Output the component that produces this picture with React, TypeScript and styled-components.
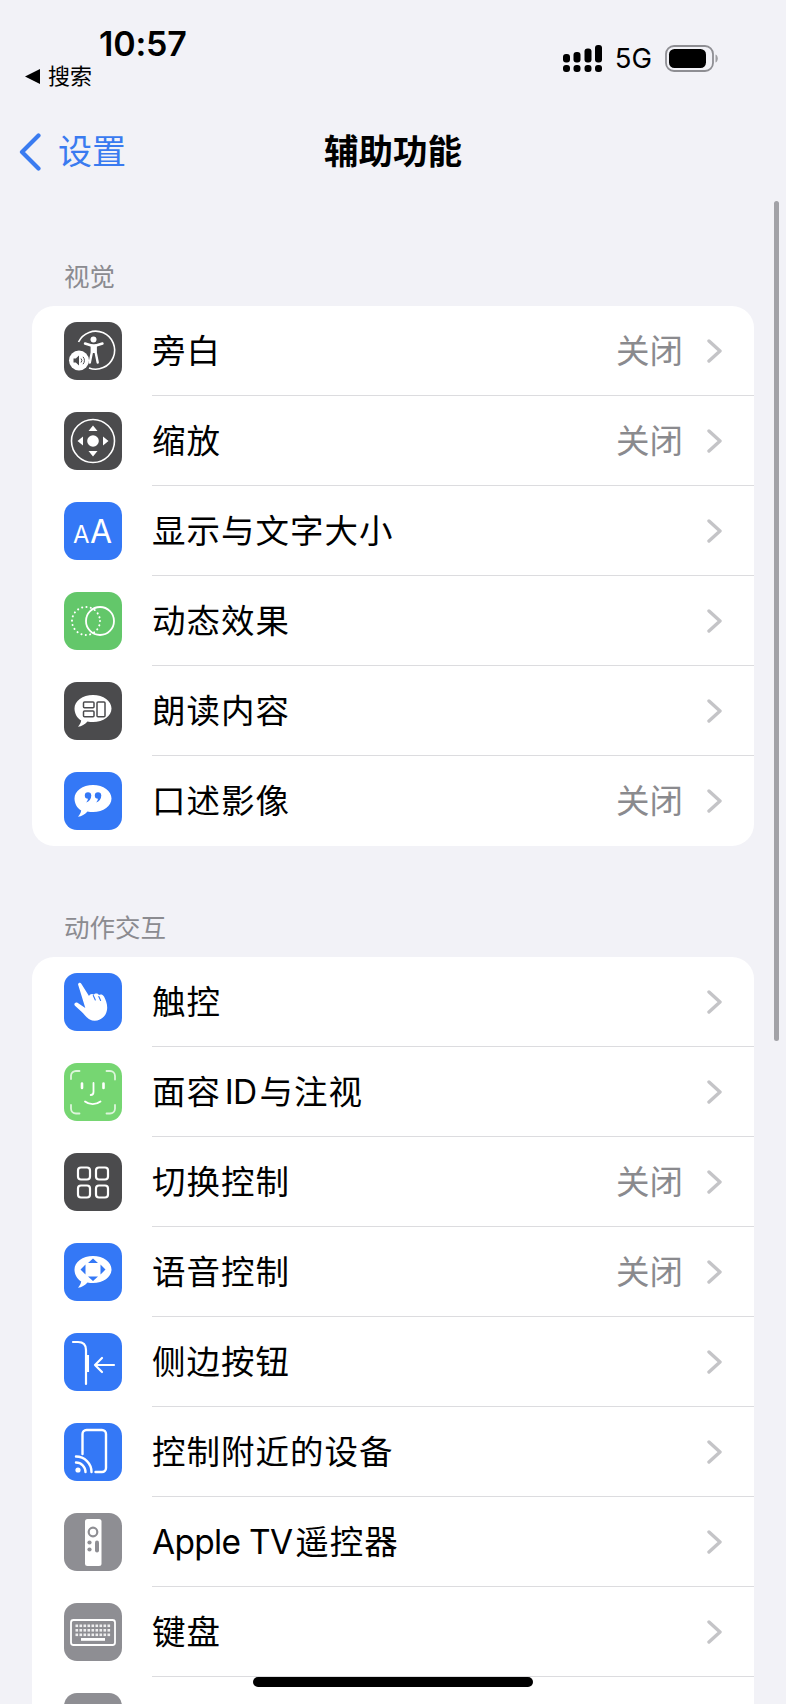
import React from "react";
import styled, { createGlobalStyle } from "styled-components";

const Global = createGlobalStyle`
  html, body { margin: 0; padding: 0; background: #f2f2f7; }
  #root { width: 786px; height: 1704px; }
  * { box-sizing: border-box; }
`;

const FONT = `Inter, "Noto Sans CJK SC", "Noto Sans", sans-serif`;

const Page = styled.div`
  position: relative;
  width: 786px;
  height: 1704px;
  overflow: hidden;
  background: #f2f2f7;
  color: #000;
  font-family: ${FONT};
`;

const StatusBar = styled.header`
  display: flex;
  justify-content: space-between;
  height: 120px;
  padding: 25px 68px 0 25px;
`;

const StatusLeft = styled.div`
  display: flex;
  flex-direction: column;
`;

const Time = styled.div`
  margin-left: 74px;
  font-size: 34px;
  line-height: 38px;
  font-weight: 600;
  letter-spacing: -0.2px;
`;

const BackCrumb = styled.div`
  display: flex;
  align-items: center;
  gap: 8px;
  margin-top: -2px;
  font-size: 22px;
  line-height: 30px;
`;

const StatusRight = styled.div`
  display: flex;
  align-items: center;
  gap: 13px;
  height: 28px;
  margin-top: 19px;
`;

const Network = styled.span`
  font-size: 27.5px;
  line-height: 28px;
  font-weight: 400;
`;

const NavBar = styled.nav`
  display: grid;
  grid-template-columns: 1fr auto 1fr;
  align-items: center;
  height: 64px;
  padding: 0 19px;
`;

const NavBack = styled.div`
  display: flex;
  align-items: center;
  gap: 17px;
  color: #3a7bf0;
  font-size: 34px;
  line-height: 64px;
`;

const NavTitle = styled.h1`
  margin: 0;
  font-size: 34.5px;
  line-height: 64px;
  font-weight: 600;
`;

const Section = styled.section<{ $top: number }>`
  margin: ${(p) => p.$top}px 32px 0;
`;

const SectionTitle = styled.h2`
  margin: 0 0 11px 32px;
  font-size: 25.5px;
  line-height: 36px;
  font-weight: 400;
  color: #8b8b90;
`;

const Card = styled.div`
  background: #fff;
  border-radius: 22px;
  overflow: hidden;
`;

const Row = styled.div`
  display: flex;
  align-items: center;
  height: 90px;
  padding-left: 32px;
`;

const IconTile = styled.div<{ $bg: string }>`
  flex: none;
  width: 58px;
  height: 58px;
  border-radius: 13px;
  background: ${(p) => p.$bg};
  svg { display: block; }
`;

const RowBody = styled.div<{ $last?: boolean }>`
  flex: 1;
  display: flex;
  align-items: center;
  height: 100%;
  margin-left: 30px;
  padding-right: 32px;
  border-bottom: ${(p) => (p.$last ? "none" : "1px solid #dcdcdf")};
`;

const Label = styled.span`
  flex: 1;
  font-size: 33.5px;
  line-height: 40px;
  letter-spacing: 1px;
`;

const Latin = styled.span<{ $gap: number; $word?: number }>`
  margin-right: ${(p) => p.$gap}px;
  letter-spacing: -0.7px;
  word-spacing: ${(p) => p.$word ?? 0}px;
`;

const Value = styled.span`
  margin-right: 24px;
  font-size: 33.5px;
  line-height: 40px;
  color: #8a8a8e;
`;

const ScrollThumb = styled.div`
  position: absolute;
  top: 201px;
  left: 774px;
  width: 5px;
  height: 840px;
  border-radius: 3px;
  background: #a2a2a7;
`;

const HomeIndicator = styled.div`
  position: absolute;
  left: 253px;
  top: 1677px;
  width: 280px;
  height: 10px;
  border-radius: 5px;
  background: #000;
`;

const BLUE = "#3478f6";
const DARK = "#4b4b4d";
const GRAY = "#8e8e93";

const Svg = ({ children }: { children: React.ReactNode }) => (
  <svg width="58" height="58" viewBox="0 0 58 58" fill="none">{children}</svg>
);

const bubble = "M29 13c10.500 0 18.500 6 18.500 13.500S39.500 40 29 40c-1.900 0-3.800-.2-5.500-.6-2.500 2.800-6 4.800-9.500 5.300 1.700-1.700 2.800-3.800 3.200-6.200C13 35.900 10.500 31.500 10.500 26.500 10.500 19 18.500 13 29 13z";

const VoiceOverIcon = () => (
  <Svg>
    <path d="M14.500 20A19 19 0 1 1 25 46" stroke="#fff" strokeWidth="1.600" />
    <circle cx="29.500" cy="17.500" r="3" fill="#fff" />
    <path d="M21 21.500l6.500 2h4.500l6.500-2" stroke="#fff" strokeWidth="2.400" strokeLinecap="round" strokeLinejoin="round" />
    <path d="M27.800 23.500v7L25.800 40.500M31.700 23.500v7L33.700 40.500" stroke="#fff" strokeWidth="2.400" strokeLinecap="round" strokeLinejoin="round" />
    <rect x="27.800" y="23" width="3.900" height="8" fill="#fff" />
    <circle cx="15" cy="38.500" r="10" fill="#fff" />
    <path d="M9.500 36.500h2.300l3.200-3v10l-3.200-3H9.500z" fill={DARK} />
    <path d="M17 36.500a3 3 0 0 1 0 4M19 34.800a5.500 5.500 0 0 1 0 7.400" stroke={DARK} strokeWidth="1" />
  </Svg>
);

const ZoomIcon = () => (
  <Svg>
    <circle cx="29" cy="29" r="21.500" stroke="#fff" strokeWidth="1.600" />
    <circle cx="29" cy="29" r="5.800" fill="#fff" />
    <path d="M29 13.500l4.500 5.500h-9zM29 44.500l-4.500-5.500h9zM13.500 29l5.500-4.500v9zM44.500 29L39 33.500v-9z" fill="#fff" />
  </Svg>
);

const TextSizeIcon = () => (
  <Svg>
    <text x="9" y="41" fontFamily="Inter, sans-serif" fontSize="24" fill="#fff">A</text>
    <text x="26" y="41" fontFamily="Inter, sans-serif" fontSize="32" fill="#fff">A</text>
  </Svg>
);

const MotionIcon = () => (
  <Svg>
    <circle cx="22" cy="29" r="14" stroke="#fff" strokeWidth="2" strokeDasharray="0.1 4.300" strokeLinecap="round" />
    <circle cx="36" cy="29" r="14" stroke="#fff" strokeWidth="1.800" />
  </Svg>
);

const SpeakIcon = () => (
  <Svg>
    <path d={bubble} fill="#fff" />
    <rect x="19.500" y="20" width="10.500" height="5.800" rx="1" stroke={DARK} strokeWidth="1.500" />
    <rect x="19.500" y="29" width="10.500" height="5.800" rx="1" stroke={DARK} strokeWidth="1.500" />
    <rect x="33" y="20" width="8" height="14.800" rx="1" stroke={DARK} strokeWidth="1.500" />
  </Svg>
);

const AudioDescIcon = () => (
  <Svg>
    <path d={bubble} fill="#fff" />
    <circle cx="24" cy="23.500" r="3.200" fill={BLUE} />
    <circle cx="34" cy="23.500" r="3.200" fill={BLUE} />
    <path d="M27.200 23.500c0 3.500-2 6-5 7 1.300-1.500 1.800-3 1.800-5zM37.200 23.500c0 3.500-2 6-5 7 1.300-1.500 1.800-3 1.800-5z" fill={BLUE} />
  </Svg>
);

const TouchIcon = () => (
  <Svg>
    <path d="M14.300 12.300c-1-2 1.800-3.400 3-1.600l7.700 12.300c.6-1.700 3.200-2.600 4.800-1.300 1-1.500 3.900-1.600 5.100.2 1.500-1 4-.6 5.100 1.500 2.600 4.800 5 12 1.300 18.300-3.700 6-11 7.300-15.500 4.800-3.700-2-5-4.700-8.500-8L11 32.800c-1.800-1.800.5-4.300 2.500-3l7.800 5.200z" fill="#fff" />
    <path d="M29.300 22.500l2 4.500M34.800 23.500l1.800 4" stroke={BLUE} strokeWidth="1.100" strokeLinecap="round" />
  </Svg>
);

const FaceIdIcon = () => (
  <Svg>
    <path d="M7 16v-3.500A5 5 0 0 1 12 8h3.500M42.500 8H46a5 5 0 0 1 5 5v3.500M51 42v3.500a5 5 0 0 1-5 5h-3.500M15.500 50.500H12a5 5 0 0 1-5-5V42" stroke="#fff" strokeOpacity="0.75" strokeWidth="1.800" strokeLinecap="round" />
    <path d="M18 20.500v4.500M39.500 20.500v4.500" stroke="#fff" strokeWidth="2.600" strokeLinecap="round" />
    <path d="M29.500 20v9c0 2-1 3-2.800 3" stroke="#fff" strokeWidth="1.800" strokeLinecap="round" />
    <path d="M21 38.500c4.500 3.500 11 3.500 15.500 0" stroke="#fff" strokeWidth="1.800" strokeLinecap="round" />
  </Svg>
);

const SwitchIcon = () => (
  <Svg>
    <rect x="14" y="14.500" width="12" height="12" rx="3" stroke="#fff" strokeWidth="2.200" />
    <rect x="32" y="14.500" width="12" height="12" rx="3" stroke="#fff" strokeWidth="2.200" />
    <rect x="14" y="32.500" width="12" height="12" rx="3" stroke="#fff" strokeWidth="2.200" />
    <rect x="32" y="32.500" width="12" height="12" rx="3" stroke="#fff" strokeWidth="2.200" />
  </Svg>
);

const VoiceControlIcon = () => (
  <Svg>
    <path d={bubble} fill="#fff" />
    <path d="M29 15.500l5 4.500H24zM29 38l-5-4.500h10zM16.500 26.500l5-5v10zM41.500 26.500l-5 5v-10z" fill={BLUE} />
  </Svg>
);

const SideButtonIcon = () => (
  <Svg>
    <path d="M9 9h5c5 0 8 3 8 8v34" stroke="#fff" strokeWidth="2.200" strokeLinecap="round" />
    <path d="M23.800 22v17" stroke="#fff" strokeWidth="2.500" />
    <path d="M50 32H31M38 25l-7 7 7 7" stroke="#fff" strokeWidth="2.200" strokeLinecap="round" strokeLinejoin="round" />
  </Svg>
);

const NearbyIcon = () => (
  <Svg>
    <path d="M18.500 31V11a4 4 0 0 1 4-4H38a4 4 0 0 1 4 4v34a4 4 0 0 1-4 4h-6.500" stroke="#fff" strokeWidth="2.400" strokeLinecap="round" />
    <circle cx="14" cy="47" r="2.600" fill="#fff" />
    <path d="M12 39.500a9.500 9.500 0 0 1 9.500 9.500M12 33.500A15.500 15.500 0 0 1 27.500 49" stroke="#fff" strokeWidth="2.400" strokeLinecap="round" />
  </Svg>
);

const RemoteIcon = () => (
  <Svg>
    <rect x="21" y="6" width="16.500" height="47" rx="2.500" fill="#fff" />
    <circle cx="29" cy="19" r="4.300" stroke={GRAY} strokeWidth="2.200" />
    <circle cx="25.500" cy="29.500" r="2.100" fill={GRAY} />
    <circle cx="25.500" cy="36.500" r="2.100" fill={GRAY} />
    <rect x="31" y="27.500" width="4" height="12" rx="2" fill={GRAY} />
  </Svg>
);

const KeyboardIcon = () => (
  <Svg>
    <rect x="7" y="17" width="44" height="25" rx="2.500" stroke="#fff" strokeWidth="1.800" />
    {[21.500, 26, 30.500].map((y) =>
      [11.500, 15.500, 19.500, 23.500, 27.500, 31.500, 35.500, 39.500, 43.500].map((x) => (
        <rect key={`${x}-${y}`} x={x} y={y} width="2.600" height="2.600" fill="#fff" opacity="0.85" />
      ))
    )}
    <rect x="17" y="35" width="24" height="2.800" fill="#fff" />
  </Svg>
);

const Chevron = () => (
  <svg width="15" height="24" viewBox="0 0 15 24" fill="none">
    <path d="M2 2l11 10L2 22" stroke="#c4c4c7" strokeWidth="3.400" strokeLinecap="round" strokeLinejoin="round" />
  </svg>
);

const SignalIcon = () => (
  <svg width="39" height="27" viewBox="0 0 39 27" fill="#000">
    <rect x="0" y="9" width="7" height="8.500" rx="3" />
    <rect x="0" y="20" width="7" height="7" rx="3" />
    <rect x="10.500" y="7" width="7" height="10.500" rx="3" />
    <rect x="10.500" y="20" width="7" height="7" rx="3" />
    <rect x="21.500" y="3.500" width="7" height="14" rx="3" />
    <rect x="21.500" y="20" width="7" height="7" rx="3" />
    <rect x="32" y="0" width="7" height="17.500" rx="3" />
    <rect x="32" y="20" width="7" height="7" rx="3" />
  </svg>
);

const BatteryIcon = () => (
  <svg width="53" height="27" viewBox="0 0 53 27" fill="none">
    <rect x="1" y="1" width="47" height="25" rx="8" stroke="#8e8e93" strokeWidth="1.800" />
    <rect x="4" y="4" width="37" height="19" rx="5.500" fill="#000" />
    <path d="M50.500 9.500c1.500.5 2.300 2.200 2.300 4s-.8 3.500-2.300 4z" fill="#a0a0a4" />
  </svg>
);

type Item = { key: string; label: React.ReactNode; value?: string; bg: string; icon?: React.ReactNode };

const vision: Item[] = [
  { key: "vo", label: "旁白", value: "关闭", bg: DARK, icon: <VoiceOverIcon /> },
  { key: "zoom", label: "缩放", value: "关闭", bg: DARK, icon: <ZoomIcon /> },
  { key: "text", label: "显示与文字大小", bg: BLUE, icon: <TextSizeIcon /> },
  { key: "motion", label: "动态效果", bg: "#63c76a", icon: <MotionIcon /> },
  { key: "speak", label: "朗读内容", bg: DARK, icon: <SpeakIcon /> },
  { key: "ad", label: "口述影像", value: "关闭", bg: BLUE, icon: <AudioDescIcon /> },
];

const interaction: Item[] = [
  { key: "touch", label: "触控", bg: BLUE, icon: <TouchIcon /> },
  { key: "face", label: <>面容<Latin $gap={3} $word={-5}> ID</Latin>与注视</>, bg: "#76d672", icon: <FaceIdIcon /> },
  { key: "switch", label: "切换控制", value: "关闭", bg: DARK, icon: <SwitchIcon /> },
  { key: "voice", label: "语音控制", value: "关闭", bg: BLUE, icon: <VoiceControlIcon /> },
  { key: "side", label: "侧边按钮", bg: BLUE, icon: <SideButtonIcon /> },
  { key: "nearby", label: "控制附近的设备", bg: BLUE, icon: <NearbyIcon /> },
  { key: "tv", label: <><Latin $gap={3}>Apple TV</Latin>遥控器</>, bg: GRAY, icon: <RemoteIcon /> },
  { key: "kb", label: "键盘", bg: GRAY, icon: <KeyboardIcon /> },
];

const SettingRow = ({ item, last }: { item: Item; last?: boolean }) => (
  <Row>
    <IconTile $bg={item.bg}>{item.icon}</IconTile>
    <RowBody $last={last}>
      <Label>{item.label}</Label>
      {item.value && <Value>{item.value}</Value>}
      <Chevron />
    </RowBody>
  </Row>
);

export default function App() {
  return (
    <Page>
      <Global />
      <StatusBar>
        <StatusLeft>
          <Time>10:57</Time>
          <BackCrumb>
            <svg width="15" height="15" viewBox="0 0 15 15" fill="#000"><path d="M15 0v15L0 7.500z" /></svg>
            搜索
          </BackCrumb>
        </StatusLeft>
        <StatusRight>
          <SignalIcon />
          <Network>5G</Network>
          <BatteryIcon />
        </StatusRight>
      </StatusBar>
      <NavBar>
        <NavBack>
          <svg width="22" height="38" viewBox="0 0 22 38" fill="none">
            <path d="M19.500 2.500L3 19l16.500 16.500" stroke="#3a7bf0" strokeWidth="4.200" strokeLinecap="round" strokeLinejoin="round" />
          </svg>
          设置
        </NavBack>
        <NavTitle>辅助功能</NavTitle>
        <div />
      </NavBar>
      <Section $top={75}>
        <SectionTitle>视觉</SectionTitle>
        <Card>
          {vision.map((item, i) => (
            <SettingRow key={item.key} item={item} last={i === vision.length - 1} />
          ))}
        </Card>
      </Section>
      <Section $top={64}>
        <SectionTitle>动作交互</SectionTitle>
        <Card>
          {interaction.map((item) => (
            <SettingRow key={item.key} item={item} />
          ))}
          <Row>
            <IconTile $bg={GRAY} />
          </Row>
        </Card>
      </Section>
      <ScrollThumb />
      <HomeIndicator />
    </Page>
  );
}
